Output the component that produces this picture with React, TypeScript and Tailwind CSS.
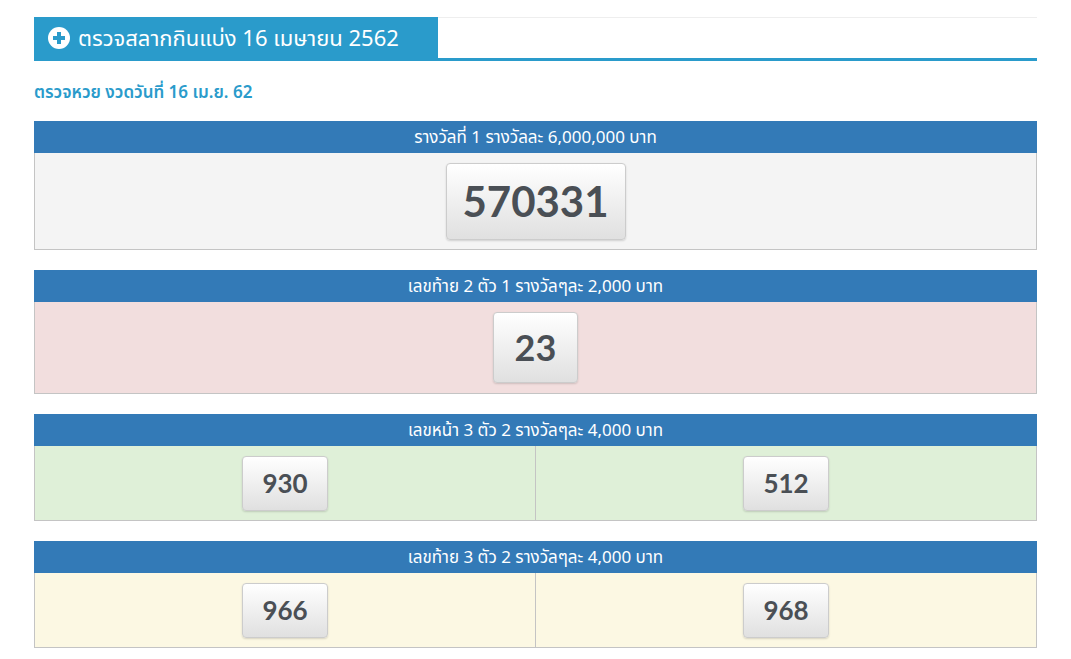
const font = { fontFamily: '"Noto Sans", "Noto Sans Thai", Tahoma, sans-serif' };

function NumBtn({ n, size }: { n: string; size: "xl" | "lg" | "md" }) {
  const cls =
    size === "xl"
      ? "w-[180px] h-[77px] text-[42px]"
      : size === "lg"
      ? "w-[85px] h-[71px] text-[36px]"
      : "w-[86px] h-[55px] text-[26px]";
  return (
    <div
      className={`${cls} flex items-center justify-center rounded border border-[#ccc] bg-gradient-to-b from-white to-[#e0e0e0] shadow-[0_1px_2px_rgba(0,0,0,0.15)] text-[#4a4f55] font-bold`}
      style={{ fontFamily: "Lato, sans-serif" }}
    >
      {n}
    </div>
  );
}

function Prize({ title, bg, children, h }: { title: string; bg: string; children: React.ReactNode; h: string }) {
  return (
    <div className="mb-5">
      <div className="h-8 bg-[#337ab7] text-white text-[17px] flex items-center justify-center">{title}</div>
      <div className={`${bg} ${h} border border-t-0 border-[#c4c4c4] flex`}>{children}</div>
    </div>
  );
}

export default function App() {
  return (
    <div className="w-[1071px] h-[659px] bg-white px-[34px] pt-[17px] overflow-hidden" style={font}>
      <div className="flex border-b-[3px] border-[#2a9bcb]">
        <div className="h-[41px] w-[404px] bg-[#2a9bcb] text-white text-[22px] flex items-center pl-[14px] gap-2">
          <svg width="22" height="22" viewBox="0 0 22 22">
            <circle cx="11" cy="11" r="11" fill="white" />
            <rect x="9" y="5" width="4" height="12" fill="#2a9bcb" />
            <rect x="5" y="9" width="12" height="4" fill="#2a9bcb" />
          </svg>
          ตรวจสลากกินแบ่ง 16 เมษายน 2562
        </div>
        <div className="flex-1 border-t border-[#eee]" />
      </div>
      <div className="text-[#2a9bcb] text-[17px] mt-[18px] mb-[16px] font-semibold">ตรวจหวย งวดวันที่ 16 เม.ย. 62</div>
      <Prize title="รางวัลที่ 1 รางวัลละ 6,000,000 บาท" bg="bg-[#f4f4f4]" h="h-[97px]">
        <div className="flex-1 flex justify-center pt-[10px]">
          <NumBtn n="570331" size="xl" />
        </div>
      </Prize>
      <Prize title="เลขท้าย 2 ตัว 1 รางวัลๆละ 2,000 บาท" bg="bg-[#f2dede]" h="h-[92px]">
        <div className="flex-1 flex justify-center pt-[10px]">
          <NumBtn n="23" size="lg" />
        </div>
      </Prize>
      <Prize title="เลขหน้า 3 ตัว 2 รางวัลๆละ 4,000 บาท" bg="bg-[#dff0d8]" h="h-[75px]">
        <div className="flex-1 flex justify-center pt-[10px] border-r border-[#c4c4c4]"><NumBtn n="930" size="md" /></div>
        <div className="flex-1 flex justify-center pt-[10px]"><NumBtn n="512" size="md" /></div>
      </Prize>
      <Prize title="เลขท้าย 3 ตัว 2 รางวัลๆละ 4,000 บาท" bg="bg-[#fcf8e3]" h="h-[75px]">
        <div className="flex-1 flex justify-center pt-[10px] border-r border-[#c4c4c4]"><NumBtn n="966" size="md" /></div>
        <div className="flex-1 flex justify-center pt-[10px]"><NumBtn n="968" size="md" /></div>
      </Prize>
    </div>
  );
}
